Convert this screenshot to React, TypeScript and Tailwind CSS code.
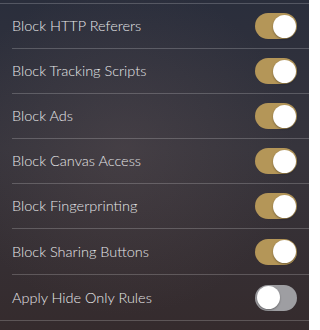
const items = [
  { label: "Block HTTP Referers", on: true },
  { label: "Block Tracking Scripts", on: true },
  { label: "Block Ads", on: true },
  { label: "Block Canvas Access", on: true },
  { label: "Block Fingerprinting", on: true },
  { label: "Block Sharing Buttons", on: true },
  { label: "Apply Hide Only Rules", on: false },
];

function Toggle({ on }: { on: boolean }) {
  return (
    <div
      className={`relative w-[42px] h-[26px] rounded-full ${
        on ? "bg-[#b49658]" : "bg-[#9e9ea2]"
      }`}
    >
      <div
        className={`absolute top-[1.5px] w-[23px] h-[23px] rounded-full bg-white shadow-[0_1px_2px_rgba(0,0,0,0.35)] ${
          on ? "right-[1.5px]" : "left-[1.5px]"
        }`}
      />
    </div>
  );
}

export default function App() {
  return (
    <div className="relative w-[309px] h-[330px] overflow-hidden bg-[linear-gradient(180deg,#2a2e3c_0%,#36343c_45%,#352b2d_100%)] font-['Lato',sans-serif]">
      <div className="absolute inset-0 bg-[radial-gradient(ellipse_at_40%_45%,rgba(120,100,100,0.22),transparent_65%)]" />
      <div className="relative pt-[3px]">
        <div className="border-t border-b border-white/20">
          {items.map((item, i) => (
            <div key={item.label} className={i > 0 ? "ml-3 border-t border-white/20" : ""}>
              <div
                className={`flex items-center justify-between pr-3 ${i > 0 ? "" : "pl-3"} ${
                  i > 4 ? "h-[45px]" : "h-[44px]"
                }`}
              >
                <span className="text-[14.5px] font-light text-[#e6e6e8]">{item.label}</span>
                <Toggle on={item.on} />
              </div>
            </div>
          ))}
        </div>
      </div>
    </div>
  );
}
